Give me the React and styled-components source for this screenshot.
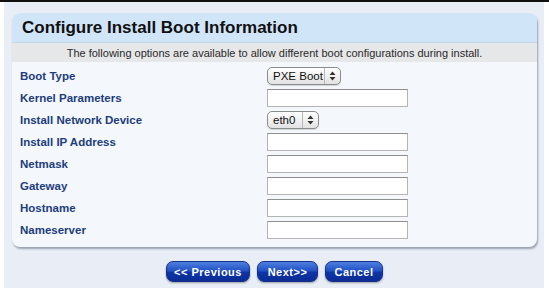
import { createGlobalStyle, styled } from 'styled-components'

const GlobalStyle = createGlobalStyle`
  html, body {
    margin: 0;
    padding: 0;
    background: #ffffff;
  }
  body {
    font-family: "Liberation Sans", Arial, sans-serif;
  }`

const TopRule = styled.div`
  height: 2px;
  background: #111111;`

const Frame = styled.div`
  margin: 0 5px 8px 4px;
  padding: 11px 7px 6px 8px;
  background: #e9eef6;
  height: 286px;
  box-sizing: border-box;`

const Card = styled.div`
  border-radius: 8px;
  overflow: hidden;
  background: #f4f7fc;
  box-shadow: 1px 2px 2px rgba(60, 70, 90, 0.45);`

const Header = styled.div`
  height: 30px;
  display: flex;
  align-items: center;
  padding-left: 10px;
  background: #d1e5f9;
  border-bottom: 1px solid #c6d6e6;
  box-sizing: border-box;`

const Title = styled.h1`
  margin: 0;
  font-size: 17px;
  font-weight: bold;
  color: #111111;`

const Intro = styled.div`
  height: 19px;
  display: flex;
  align-items: center;
  justify-content: center;
  background: #e6e7e9;
  font-size: 11px;
  color: #2a2a2a;`

const Form = styled.div`
  padding: 3px 0 6px 8px;`

const Row = styled.div`
  display: grid;
  grid-template-columns: 247px 1fr;
  align-items: center;
  height: 22px;`

const Label = styled.label`
  font-size: 11.5px;
  font-weight: bold;
  color: #223d7c;`

const TextBox = styled.div`
  width: 141px;
  height: 18px;
  box-sizing: border-box;
  background: #ffffff;
  border: 1px solid #b4b4b4;
  border-top-color: #8e8e8e;`

const Select = styled.div`
  width: ${(p) => p.$width}px;
  height: 18px;
  box-sizing: border-box;
  display: flex;
  align-items: stretch;
  border: 1px solid #8c8c8c;
  border-radius: 5px;
  background: linear-gradient(#ffffff, #f1f1f1 50%, #e2e2e2);
  box-shadow: 0 1px 1px rgba(0, 0, 0, 0.15);
  overflow: hidden;`

const SelectText = styled.span`
  flex: 1;
  white-space: nowrap;
  padding-left: 5px;
  font-size: 11.5px;
  line-height: 16px;
  color: #111111;`

const SelectArrows = styled.span`
  width: 15px;
  flex: none;
  display: flex;
  align-items: center;
  justify-content: center;
  border-left: 1px solid #b8b8b8;`

const ButtonBar = styled.div`
  display: flex;
  justify-content: center;
  gap: 7px;
  margin-top: 14px;`

const Button = styled.button`
  width: ${(p) => p.$width}px;
  height: 21px;
  padding: 0;
  border: 1px solid #17318a;
  border-radius: 7px;
  background: linear-gradient(#4c7fe0, #2453c4 45%, #0e35a8 55%, #0a2c92);
  box-shadow: 0 1px 2px rgba(0, 0, 0, 0.35);
  color: #ffffff;
  font-family: "Liberation Sans", Arial, sans-serif;
  font-size: 11px;
  font-weight: bold;
  letter-spacing: 0.5px;`

const Arrows = () => (
  <svg width="7" height="10" viewBox="0 0 7 10">
    <path d="M3.5 0.5 L6.5 4 L0.5 4 Z" fill="#333" />
    <path d="M3.5 9.5 L6.5 6 L0.5 6 Z" fill="#333" />
  </svg>
)

const fields = [
  { label: 'Boot Type', select: 'PXE Boot', width: 74 },
  { label: 'Kernel Parameters' },
  { label: 'Install Network Device', select: 'eth0', width: 52 },
  { label: 'Install IP Address' },
  { label: 'Netmask' },
  { label: 'Gateway' },
  { label: 'Hostname' },
  { label: 'Nameserver' },
]

const App = () => {
  return (
    <>
      <GlobalStyle />
      <TopRule />
      <Frame>
        <Card>
          <Header>
            <Title>Configure Install Boot Information</Title>
          </Header>
          <Intro>
            The following options are available to allow different boot
            configurations during install.
          </Intro>
          <Form>
            {fields.map((f) => (
              <Row key={f.label}>
                <Label>{f.label}</Label>
                {f.select ? (
                  <Select $width={f.width}>
                    <SelectText>{f.select}</SelectText>
                    <SelectArrows>
                      <Arrows />
                    </SelectArrows>
                  </Select>
                ) : (
                  <TextBox />
                )}
              </Row>
            ))}
          </Form>
        </Card>
        <ButtonBar>
          <Button $width={84}>&lt;&lt; Previous</Button>
          <Button $width={61}>Next&gt;&gt;</Button>
          <Button $width={58}>Cancel</Button>
        </ButtonBar>
      </Frame>
    </>
  )
}

export default App
